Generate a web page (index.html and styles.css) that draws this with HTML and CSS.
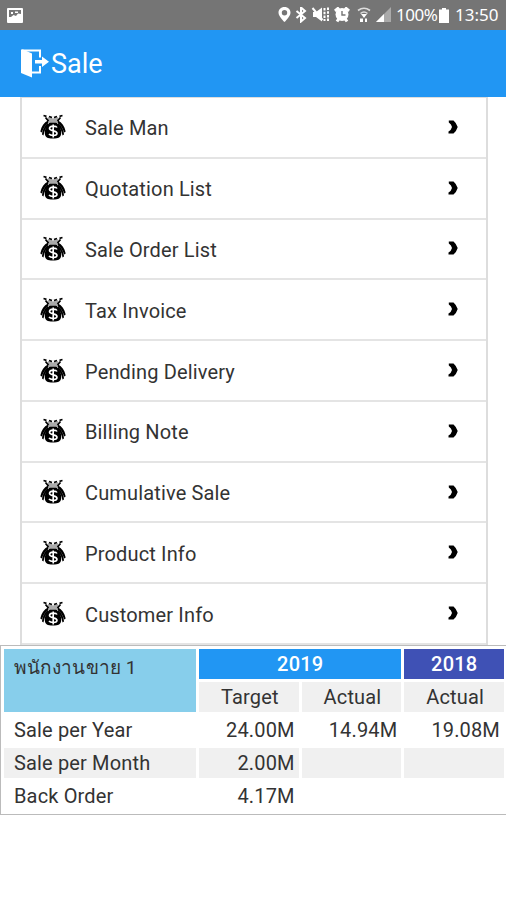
FILE: index.html
```html
<!DOCTYPE html>
<html lang="en">
<head>
    <meta charset="UTF-8">
    <meta name="viewport" content="width=device-width, initial-scale=1.0">
    <title>Sale</title>
    <link rel="stylesheet" href="styles.css">
</head>
<body>
    <!-- Shared icons -->
    <svg class="sprite" width="0" height="0">
        <symbol id="bag" viewBox="0 0 26 26">
            <path d="M8 3l5 1.500L18 3l1 5H7z" fill="#aaa"/>
            <path d="M3.500 1.500l3 .8M22.500 1.500l-3 .8M8.500 7L5.500 3.500M17.500 7l3-3.500M9 2.500l3 1M17 2.500l-3 1" stroke="#000" stroke-width="1.800"/>
            <path d="M8 6.500C4 8.500 1.500 12 .3 17.500L1.800 18.500C3.500 14 5 11.500 8.500 9zM18 6.500c4 2 6.500 5.500 7.700 11L24.200 18.500C22.500 14 21 11.500 17.500 9z"/>
            <path d="M7.500 9.500C4 12.500 2.200 16 2 20.500L3.500 21.500C4.200 17 5.500 14 8.500 11zM18.500 9.500c3.500 3 5.300 6.500 5.500 11L22.500 21.500C21.800 17 20.500 14 17.500 11z"/>
            <path d="M9.500 8.500h7c3.500 3.500 5 7 4.700 11-.5 4-2.500 5-8.200 5s-7.700-1-8.200-5c-.3-4 1.200-7.500 4.700-11z"/>
            <path d="M17 13.500c-1-2-7.500-2-7.500 1 0 3 7.500 1.700 7.500 4.700 0 3-6.500 2.800-8 .8M13.200 10.500v13" fill="none" stroke="#fff" stroke-width="1.600"/>
        </symbol>
        <symbol id="chevron" viewBox="0 0 10 14">
            <path d="M.8.500h4.700Q8.500 3 9.700 7 8.500 11 5.500 13.500H.5V11.500Q3.300 10 4 7 3.500 4 .8 2.500z"/>
        </symbol>
    </svg>

    <div class="status-bar">
        <svg class="picture-icon" viewBox="0 0 16 15">
            <rect width="16" height="15" rx="1" fill="#fff"/>
            <path d="M2 2h12v4l-3-.5L9 8 6.500 7 4 9H2z" fill="#757575"/>
            <path d="M4 4h2v2H4zM8 3.500h3V5H8z" fill="#fff"/>
        </svg>
        <svg class="status-icons" viewBox="0 0 116 16" fill="#fff">
            <path fill-rule="evenodd" d="M6.500 0C2.800 0 .5 2.500.5 5.700.5 9.500 6.500 15 6.500 15s6-5.500 6-9.300C12.500 2.500 10.200 0 6.500 0zm0 3a2.700 2.700 0 1 1 0 5.400 2.700 2.700 0 0 1 0-5.400z"/>
            <path d="M18.500 4l8.500 7-4 3.500V.500L27 4l-8.500 7" fill="none" stroke="#fff" stroke-width="2"/>
            <path d="M35 5h3l6-4.500v14L38 10h-3z"/>
            <path d="M34.500 1l10 12" stroke="#fff" stroke-width="2"/>
            <path d="M46.500 1v13M50 .500v14" stroke="#fff" stroke-width="2" stroke-dasharray="2.500 1.200"/>
            <circle cx="64" cy="7.500" r="6.500"/>
            <path d="M57 4l4-3.500M71 4L67 .500M59 14.500l2-3M69 14.500l-2-3" stroke="#fff" stroke-width="3"/>
            <path d="M64 4v4h3.500" fill="none" stroke="#757575" stroke-width="1.400"/>
            <path d="M80 3.500q6-4.500 12 0M82.500 6.500q3.500-3 7 0" fill="none" stroke="#ddd" stroke-width="1.600"/>
            <path d="M83 7h6l-3 4zM82 11.500h3V15h-3zM87 11.500h2V15h-2z"/>
            <path d="M113 0v15H98z" fill="#aaa"/>
            <path d="M106 7v8h-8z"/>
        </svg>
        <span class="battery-text">100%</span>
        <svg class="battery-icon" viewBox="0 0 10 15" fill="#fff"><path d="M3 0h4v1.500h3V15H0V1.500h3z"/></svg>
        <span class="clock">13:50</span>
    </div>

    <header class="header">
        <svg class="exit-icon" viewBox="0 0 28 29" fill="#fff">
            <path d="M0 .500h2L11 4.500v24L0 24z"/>
            <path d="M1 1.500h18v7M19 17v6.500h-8" fill="none" stroke="#fff" stroke-width="2"/>
            <path d="M14 11h7V7.500l7 5.200-7 5.200v-3.500h-7z"/>
        </svg>
        <h1>Sale</h1>
    </header>

    <ul class="menu">
        <li><svg class="bag"><use href="#bag"/></svg><span>Sale Man</span><svg class="chevron"><use href="#chevron"/></svg></li>
        <li><svg class="bag"><use href="#bag"/></svg><span>Quotation List</span><svg class="chevron"><use href="#chevron"/></svg></li>
        <li><svg class="bag"><use href="#bag"/></svg><span>Sale Order List</span><svg class="chevron"><use href="#chevron"/></svg></li>
        <li><svg class="bag"><use href="#bag"/></svg><span>Tax Invoice</span><svg class="chevron"><use href="#chevron"/></svg></li>
        <li><svg class="bag"><use href="#bag"/></svg><span>Pending Delivery</span><svg class="chevron"><use href="#chevron"/></svg></li>
        <li><svg class="bag"><use href="#bag"/></svg><span>Billing Note</span><svg class="chevron"><use href="#chevron"/></svg></li>
        <li><svg class="bag"><use href="#bag"/></svg><span>Cumulative Sale</span><svg class="chevron"><use href="#chevron"/></svg></li>
        <li><svg class="bag"><use href="#bag"/></svg><span>Product Info</span><svg class="chevron"><use href="#chevron"/></svg></li>
        <li><svg class="bag"><use href="#bag"/></svg><span>Customer Info</span><svg class="chevron"><use href="#chevron"/></svg></li>
    </ul>

    <table class="summary">
        <colgroup>
            <col class="col-name">
            <col>
            <col>
            <col>
        </colgroup>
        <tr>
            <td class="salesman" rowspan="2" lang="th">พนักงานขาย 1</td>
            <th class="year-current" colspan="2">2019</th>
            <th class="year-last">2018</th>
        </tr>
        <tr class="sub-head">
            <td>Target</td>
            <td>Actual</td>
            <td>Actual</td>
        </tr>
        <tr>
            <td class="label">Sale per Year</td>
            <td>24.00M</td>
            <td>14.94M</td>
            <td>19.08M</td>
        </tr>
        <tr class="shaded">
            <td class="label">Sale per Month</td>
            <td>2.00M</td>
            <td></td>
            <td></td>
        </tr>
        <tr>
            <td class="label">Back Order</td>
            <td>4.17M</td>
            <td></td>
            <td></td>
        </tr>
    </table>
</body>
</html>
```
FILE: styles.css
```css
* {
    margin: 0;
    padding: 0;
    box-sizing: border-box;
}

body {
    font-family: Roboto, "Noto Sans", sans-serif;
    font-size: 20px;
    color: #333;
    background: #fff;
    min-height: 100vh;
    overflow: hidden;
}

svg {
    display: block;
    flex: none;
}

.sprite {
    position: absolute;
}

.status-bar {
    height: 30px;
    padding: 0 7px;
    display: flex;
    align-items: center;
    background: #757575;
    color: #fff;
    font-family: "Noto Sans", sans-serif;
    font-size: 17px;
    line-height: 30px;
}

.picture-icon {
    width: 16px;
    height: 15px;
}

.status-icons {
    width: 116px;
    height: 16px;
    margin-left: auto;
}

.battery-text {
    width: 43px;
    margin-left: 2px;
    letter-spacing: -0.5px;
}

.battery-icon {
    width: 10px;
    height: 15px;
}

.clock {
    width: 44px;
    margin-left: 6px;
}

.header {
    height: 67px;
    padding-left: 21px;
    display: flex;
    align-items: center;
    background: #2196f3;
    color: #fff;
}

.exit-icon {
    width: 28px;
    height: 29px;
}

.header h1 {
    margin-left: 2px;
    font-size: 27px;
    font-weight: 400;
}

.menu {
    width: 468px;
    height: 548px;
    margin-left: 20px;
    display: flex;
    flex-direction: column;
    list-style: none;
    border: 2px solid #ddd;
    border-top-width: 1px;
    border-bottom: 0;
}

.menu li {
    flex: 1;
    padding: 0 28px 0 18px;
    display: flex;
    align-items: center;
    border-bottom: 2px solid #e4e4e4;
    letter-spacing: 0.15px;
}

.menu span {
    flex: 1;
    margin-left: 19px;
    padding-top: 2px;
}

.bag {
    width: 26px;
    height: 26px;
}

.chevron {
    width: 10px;
    height: 14px;
    margin-bottom: 1px;
}

.summary {
    width: 508px;
    table-layout: fixed;
    border: 1px solid #bbb;
    border-collapse: separate;
    border-spacing: 3px;
    letter-spacing: 0.15px;
}

.summary tr {
    height: 30px;
}

.summary td {
    padding: 0 4px;
    text-align: right;
    line-height: 24px;
}

.col-name {
    width: 192px;
}

.summary .label,
.summary .salesman {
    padding-left: 10px;
    text-align: left;
}

.summary .salesman {
    padding-top: 7px;
    vertical-align: top;
    font-size: 19px;
    letter-spacing: 0.1px;
    background: #87ceeb;
}

.summary th {
    font-weight: 500;
    color: #fff;
    line-height: 24px;
}

.year-current {
    background: #2196f3;
}

.year-last {
    background: #3f51b5;
}

.summary .sub-head td {
    padding-left: 6px;
    text-align: center;
}

.sub-head td,
.shaded td {
    background: #f0f0f0;
}
```
